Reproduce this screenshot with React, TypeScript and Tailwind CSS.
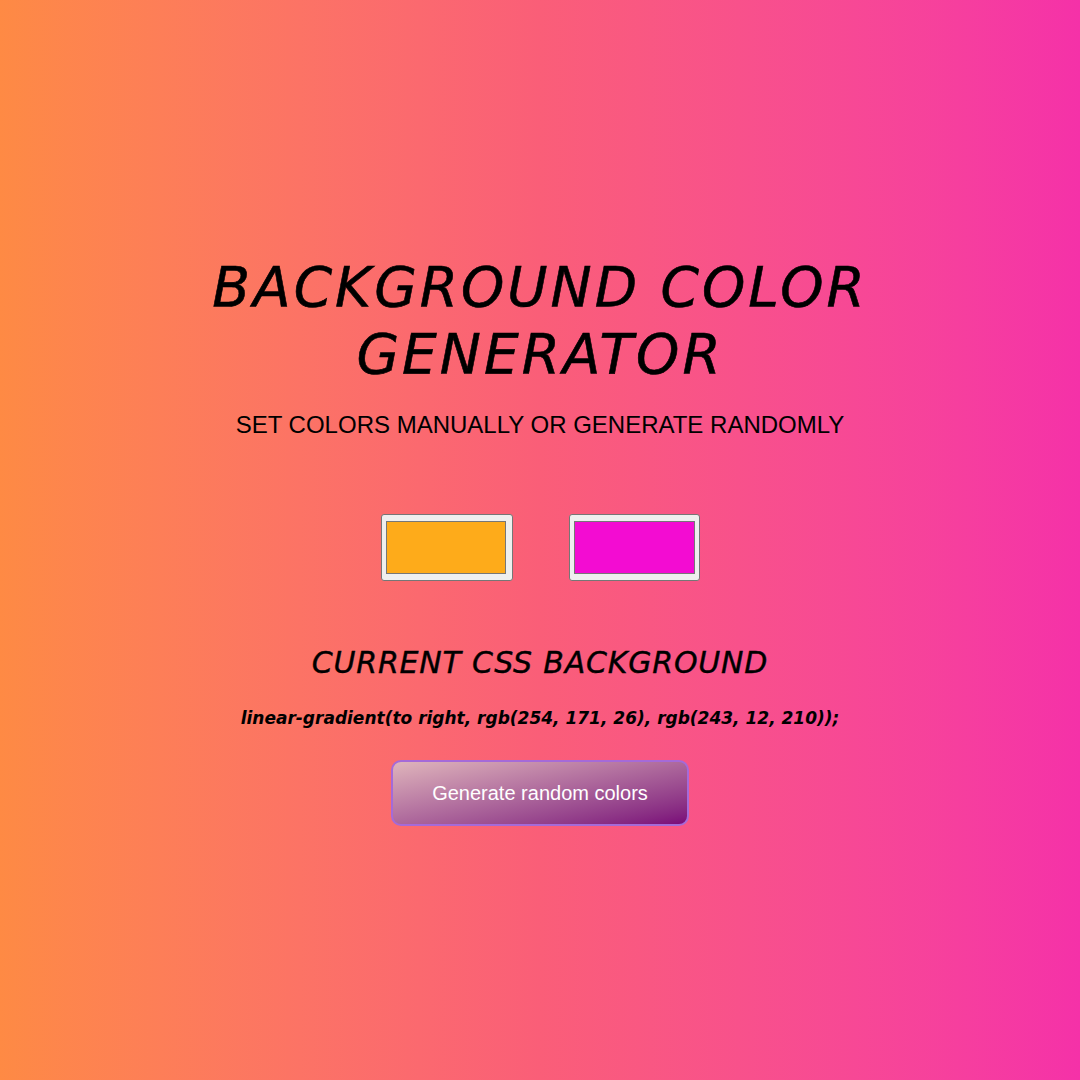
export default function App() {
  return (
    <div className="min-h-screen w-full bg-gradient-to-r from-[#fe8a44] via-[#fa5e78] to-[#f531a8] flex flex-col items-center pt-[254px] text-black">
      {/* Title */}
      <h1 className="font-['DejaVu_Sans',sans-serif] italic font-normal text-[55px] leading-[67px] text-center tracking-[3px] w-[780px] [-webkit-text-stroke:0.6px_#000]">
        BACKGROUND COLOR GENERATOR
      </h1>
      <h3 className="mt-[23px] font-['Liberation_Sans',Arial,sans-serif] text-[24px] leading-[28px] text-center">
        SET COLORS MANUALLY OR GENERATE RANDOMLY
      </h3>

      {/* Colour pickers */}
      <div className="mt-[75px] flex items-center gap-[56px]">
        <div className="w-[132px] h-[67px] bg-[#efefef] border border-[#767676] rounded-[3px] pl-[4px] pr-[6px] pt-[6px] pb-[6px]">
          <div className="w-full h-full bg-[#feab1a] border border-[#777777]" />
        </div>
        <div className="w-[131px] h-[67px] bg-[#efefef] border border-[#767676] rounded-[3px] pl-[4px] pr-[4px] pt-[6px] pb-[6px]">
          <div className="w-full h-full bg-[#f30cd2] border border-[#777777]" />
        </div>
      </div>

      {/* Current CSS */}
      <h2 className="mt-[64px] font-['DejaVu_Sans',sans-serif] italic font-normal text-[30px] leading-[36px] text-center tracking-[0.8px] [-webkit-text-stroke:0.4px_#000]">
        CURRENT CSS BACKGROUND
      </h2>
      <p className="mt-[25px] font-['DejaVu_Sans',sans-serif] italic font-bold text-[17px] leading-[24px] text-center">
        linear-gradient(to right, rgb(254, 171, 26), rgb(243, 12, 210));
      </p>

      <button className="mt-[30px] w-[298px] h-[66px] rounded-[10px] border-2 border-[#a56ad8] bg-gradient-to-br from-[#dfb5bb] to-[#7a0679] text-white font-['Liberation_Sans',Arial,sans-serif] text-[20px] cursor-pointer">
        Generate random colors
      </button>
    </div>
  );
}
